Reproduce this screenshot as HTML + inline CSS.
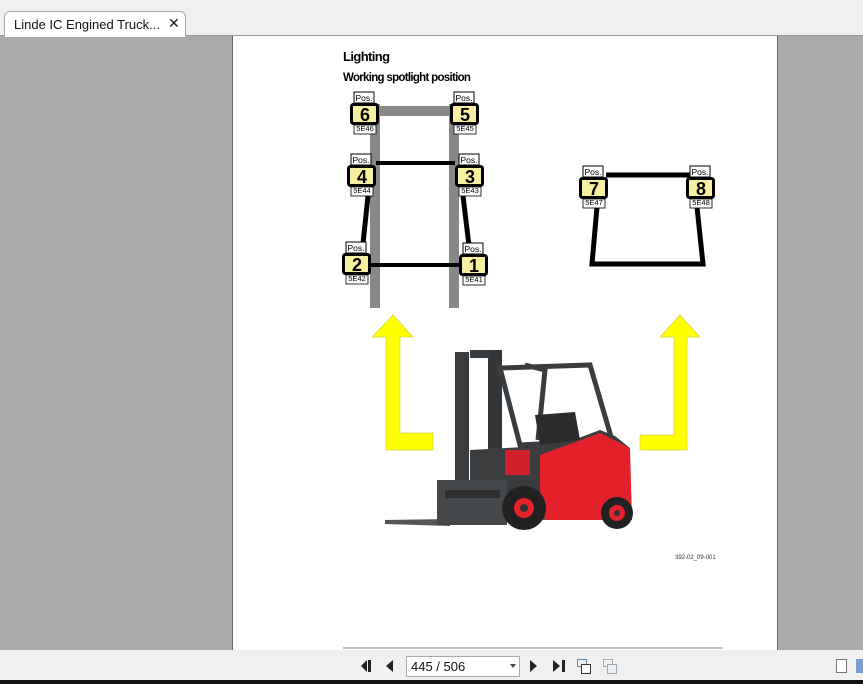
<!DOCTYPE html>
<html><head><meta charset="utf-8"><style>
html,body{margin:0;padding:0;width:863px;height:684px;overflow:hidden;background:#aaaaaa;font-family:"Liberation Sans",Arial,sans-serif}
#top{position:absolute;left:0;top:0;width:863px;height:35px;background:#f0f0f0;border-bottom:1px solid #999}
#tab{position:absolute;left:4px;top:11px;width:180px;height:25px;background:#fff;border:1px solid #aaa;border-bottom:none;border-radius:6px 6px 0 0;font-size:13px;color:#111}
#page{position:absolute;left:232px;top:36px;width:544px;height:614px;background:#fff;border-left:1px solid #666;border-right:1px solid #666}
</style></head><body>
<div id="top"><div id="tab"><span style="position:absolute;left:9px;top:5px">Linde IC Engined Truck...</span><span style="position:absolute;left:163px;top:3px;font-size:14px">✕</span></div></div>
<div id="page"></div>
<svg style="position:absolute;left:0;top:0" width="863" height="684" font-family="Liberation Sans,Arial,sans-serif">
<text x="343" y="61" font-size="13" font-weight="bold" letter-spacing="-0.6">Lighting</text>
<text x="343" y="81" font-size="11.5" font-weight="bold" letter-spacing="-0.7">Working spotlight position</text>
<rect x="370" y="104" width="10" height="204" fill="#888"/>
<rect x="449" y="104" width="10" height="204" fill="#888"/>
<rect x="375" y="106" width="80" height="10" fill="#888"/>
<g stroke="#000" stroke-width="4" fill="none">
<line x1="376" y1="163" x2="455" y2="163"/>
<line x1="371" y1="265" x2="459" y2="265"/>
<line x1="368" y1="196" x2="362" y2="253" stroke-width="5"/>
<line x1="463" y1="196" x2="470" y2="254" stroke-width="5"/>
<line x1="606" y1="175" x2="690" y2="175" stroke-width="5"/>
<polyline points="597,207 592,264 703,264 697,207" stroke-width="5"/>
</g>
<defs><g id="lab" font-weight="normal">
<rect x="4" y="0" width="20" height="11" fill="#fff" stroke="#000" stroke-width="1"/>
<text x="14" y="9" font-size="8.5" text-anchor="middle">Pos.</text>
<rect x="1.5" y="12.5" width="26" height="19" rx="2" fill="#f7f0a0" stroke="#000" stroke-width="3"/>
<rect x="4" y="33" width="22" height="9" fill="#fff" stroke="#000" stroke-width="0.8"/>
</g></defs>
<use href="#lab" x="350" y="92"/><use href="#lab" x="450" y="92"/>
<use href="#lab" x="347" y="154"/><use href="#lab" x="455" y="154"/>
<use href="#lab" x="342" y="242"/><use href="#lab" x="459" y="243"/>
<use href="#lab" x="579" y="166"/><use href="#lab" x="686" y="166"/>
<g font-weight="bold" font-size="18" text-anchor="middle">
<text x="365" y="121">6</text><text x="465" y="121">5</text>
<text x="362" y="183">4</text><text x="470" y="183">3</text>
<text x="357" y="271">2</text><text x="474" y="272">1</text>
<text x="594" y="195">7</text><text x="701" y="195">8</text>
</g>
<g font-size="7.5" text-anchor="middle">
<text x="365" y="131">5E46</text><text x="465" y="131">5E45</text>
<text x="362" y="193">5E44</text><text x="470" y="193">5E43</text>
<text x="357" y="281">5E42</text><text x="474" y="282">5E41</text>
<text x="594" y="205">5E47</text><text x="701" y="205">5E48</text>
</g>
<polygon points="393,315 413,337 400,337 400,433 433,433 433,450 386,450 386,337 372,337" fill="#ffff00" stroke="#d8d040" stroke-width="0.7"/>
<polygon points="680,315 700,337 687,337 687,450 640,450 640,435 674,435 674,337 660,337" fill="#ffff00" stroke="#d8d040" stroke-width="0.7"/>
<g>
<polygon points="385,520 450,519 450,526 385,524" fill="#555"/>
<rect x="455" y="352" width="14" height="140" fill="#3a3d40"/>
<rect x="488" y="350" width="14" height="142" fill="#34373a"/>
<rect x="470" y="350" width="20" height="8" fill="#3a3d40"/>
<path d="M500 368 L590 365 L612 440 L520 445 Z" fill="none" stroke="#3a3d40" stroke-width="5"/>
<path d="M525 365 L545 370 L538 440" fill="none" stroke="#3a3d40" stroke-width="5"/>
<path d="M470 450 L560 445 L600 430 L615 436 L630 448 L630 515 L540 520 L470 515 Z" fill="#3a3c3e"/>
<path d="M540 455 L600 433 L630 448 L632 520 L545 520 L540 490 Z" fill="#e4202a"/>
<path d="M505 450 L530 450 L530 475 L505 475 Z" fill="#d0202a"/>
<rect x="437" y="480" width="70" height="45" fill="#45484b"/>
<rect x="445" y="490" width="55" height="8" fill="#2c2e30"/>
<circle cx="524" cy="508" r="22" fill="#222"/><circle cx="524" cy="508" r="10" fill="#e4202a"/><circle cx="524" cy="508" r="4" fill="#333"/>
<circle cx="617" cy="513" r="16" fill="#222"/><circle cx="617" cy="513" r="8" fill="#e4202a"/><circle cx="617" cy="513" r="3" fill="#333"/>
<path d="M535 415 L575 412 L580 440 L540 445 Z" fill="#2a2c2e"/>
</g>
<text x="675" y="559" font-size="6" fill="#333">392-02_09-001</text>
<line x1="343" y1="648" x2="723" y2="648" stroke="#888" stroke-width="1"/>
<rect x="0" y="650" width="863" height="30" fill="#f0f0f0"/>
<g fill="#222">
<polygon points="361,666 367,660 367,672"/><rect x="368" y="660" width="3" height="12"/>
<polygon points="386,666 393,660 393,672"/>
<polygon points="537,666 530,660 530,672"/>
<polygon points="560,666 553,660 553,672"/><rect x="562" y="660" width="3" height="12"/>
</g>
<rect x="406.5" y="656.5" width="113" height="20" fill="#fff" stroke="#aaa"/>
<text x="411" y="671" font-size="13" fill="#111">445 / 506</text>
<polygon points="510,664 516,664 513,668" fill="#444"/>
<g fill="none" stroke-width="1">
<rect x="577.5" y="659.5" width="9" height="7" stroke="#5a8ab0"/><rect x="581.5" y="664.5" width="9" height="9" stroke="#333" fill="#fff"/>
<rect x="603.5" y="659.5" width="9" height="7" stroke="#9ab"/><rect x="607.5" y="664.5" width="9" height="9" stroke="#9ab" fill="#f0f0f0"/>
<rect x="836.5" y="659.5" width="10" height="13" stroke="#777" fill="#fff"/>
</g>
<rect x="856" y="659" width="7" height="14" fill="#7aa0d0"/>
<rect x="0" y="680" width="863" height="4" fill="#111"/>
</svg>
</body></html>
